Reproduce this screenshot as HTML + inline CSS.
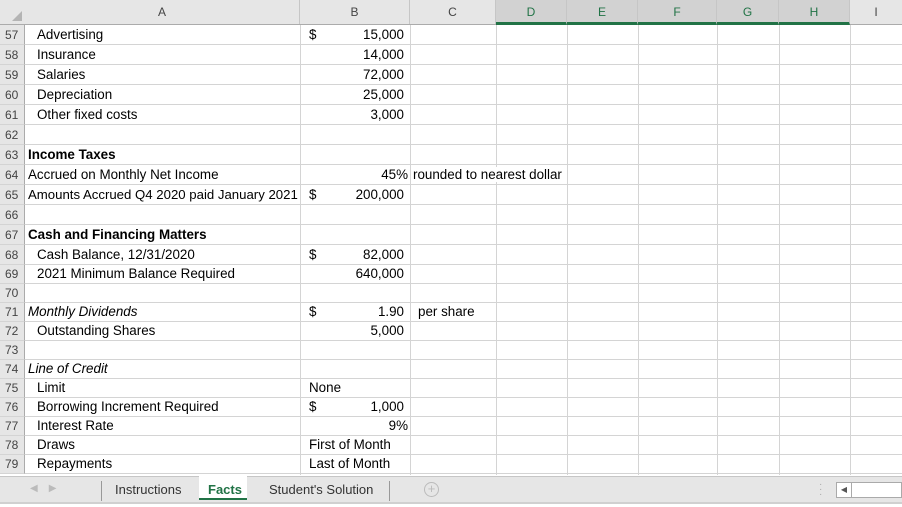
<!DOCTYPE html>
<html><head><meta charset="utf-8"><style>
*{margin:0;padding:0;box-sizing:border-box}
body{width:902px;height:507px;overflow:hidden;background:#fff;font-family:"Liberation Sans",sans-serif;font-size:13.4px;color:#000;position:relative}
.hdr{position:absolute;top:0;left:0;width:902px;height:25px;background:#e6e6e6;border-bottom:1px solid #ababab}
.ch{position:absolute;top:0;height:24px;line-height:24px;text-align:center;color:#444;font-size:12px;border-right:1px solid #c6c6c6}
.ch.sel{background:#d2d2d2;color:#217346;border-bottom:3px solid #217346;height:25px}
.rn{position:absolute;left:0;width:25px;background:#e6e6e6;color:#444;font-size:12px;padding-left:5px;border-right:1px solid #ababab;border-bottom:1px solid #d4d4d4}
.vl{position:absolute;top:25px;height:450px;width:1px;background:#d4d4d4}
.hl{position:absolute;left:25px;width:877px;height:1px;background:#d4d4d4}
.t{position:absolute;white-space:nowrap}
.r{text-align:right}
.tab{position:absolute;top:476px;left:0;width:902px;height:28px;background:#e6e6e6;border-top:1px solid #c6c6c6;border-bottom:2px solid #d0d0d0}
</style></head><body>
<div class="hdr">
<svg style="position:absolute;left:12px;top:11px" width="10" height="10"><path d="M10 0V10H0Z" fill="#b4b4b4"/></svg>
<div class="ch" style="left:25px;width:275px">A</div>
<div class="ch" style="left:300px;width:110px">B</div>
<div class="ch" style="left:410px;width:86px">C</div>
<div class="ch sel" style="left:496px;width:71px">D</div>
<div class="ch sel" style="left:567px;width:71px">E</div>
<div class="ch sel" style="left:638px;width:79px">F</div>
<div class="ch sel" style="left:717px;width:62px">G</div>
<div class="ch sel" style="left:779px;width:71px">H</div>
<div class="ch" style="left:850px;width:52px;border:none">I</div>
</div>
<div class="vl" style="left:300px"></div><div class="vl" style="left:410px"></div><div class="vl" style="left:496px"></div><div class="vl" style="left:567px"></div><div class="vl" style="left:638px"></div><div class="vl" style="left:717px"></div><div class="vl" style="left:779px"></div><div class="vl" style="left:850px"></div>

<div class="rn" style="top:25px;height:20px;line-height:20px">57</div><div class="hl" style="top:44px"></div>
<div class="rn" style="top:45px;height:20px;line-height:20px">58</div><div class="hl" style="top:64px"></div>
<div class="rn" style="top:65px;height:20px;line-height:20px">59</div><div class="hl" style="top:84px"></div>
<div class="rn" style="top:85px;height:20px;line-height:20px">60</div><div class="hl" style="top:104px"></div>
<div class="rn" style="top:105px;height:20px;line-height:20px">61</div><div class="hl" style="top:124px"></div>
<div class="rn" style="top:125px;height:20px;line-height:20px">62</div><div class="hl" style="top:144px"></div>
<div class="rn" style="top:145px;height:20px;line-height:20px">63</div><div class="hl" style="top:164px"></div>
<div class="rn" style="top:165px;height:20px;line-height:20px">64</div><div class="hl" style="top:184px"></div>
<div class="rn" style="top:185px;height:20px;line-height:20px">65</div><div class="hl" style="top:204px"></div>
<div class="rn" style="top:205px;height:20px;line-height:20px">66</div><div class="hl" style="top:224px"></div>
<div class="rn" style="top:225px;height:20px;line-height:20px">67</div><div class="hl" style="top:244px"></div>
<div class="rn" style="top:245px;height:20px;line-height:20px">68</div><div class="hl" style="top:264px"></div>
<div class="rn" style="top:265px;height:19px;line-height:19px">69</div><div class="hl" style="top:283px"></div>
<div class="rn" style="top:284px;height:19px;line-height:19px">70</div><div class="hl" style="top:302px"></div>
<div class="rn" style="top:303px;height:19px;line-height:19px">71</div><div class="hl" style="top:321px"></div>
<div class="rn" style="top:322px;height:19px;line-height:19px">72</div><div class="hl" style="top:340px"></div>
<div class="rn" style="top:341px;height:19px;line-height:19px">73</div><div class="hl" style="top:359px"></div>
<div class="rn" style="top:360px;height:19px;line-height:19px">74</div><div class="hl" style="top:378px"></div>
<div class="rn" style="top:379px;height:19px;line-height:19px">75</div><div class="hl" style="top:397px"></div>
<div class="rn" style="top:398px;height:19px;line-height:19px">76</div><div class="hl" style="top:416px"></div>
<div class="rn" style="top:417px;height:19px;line-height:19px">77</div><div class="hl" style="top:435px"></div>
<div class="rn" style="top:436px;height:19px;line-height:19px">78</div><div class="hl" style="top:454px"></div>
<div class="rn" style="top:455px;height:19px;line-height:19px">79</div><div class="hl" style="top:473px"></div>

<div class="t" style="left:37px;top:27px">Advertising</div><div class="t" style="left:309px;top:27px">$</div><div class="t r" style="right:498px;top:27px">15,000</div>
<div class="t" style="left:37px;top:47px">Insurance</div><div class="t r" style="right:498px;top:47px">14,000</div>
<div class="t" style="left:37px;top:67px">Salaries</div><div class="t r" style="right:498px;top:67px">72,000</div>
<div class="t" style="left:37px;top:87px">Depreciation</div><div class="t r" style="right:498px;top:87px">25,000</div>
<div class="t" style="left:37px;top:107px">Other fixed costs</div><div class="t r" style="right:498px;top:107px">3,000</div>
<div class="t" style="left:28px;top:147px;font-weight:bold">Income Taxes</div>
<div class="t" style="left:28px;top:167px">Accrued on Monthly Net Income</div><div class="t r" style="right:494px;top:167px">45%</div><div class="t" style="left:413px;top:167px;background:#fff">rounded to nearest dollar</div>
<div class="t" style="left:28px;top:187px;font-size:13.2px">Amounts Accrued Q4 2020 paid January 2021</div><div class="t" style="left:309px;top:187px">$</div><div class="t r" style="right:498px;top:187px">200,000</div>
<div class="t" style="left:28px;top:227px;font-weight:bold">Cash and Financing Matters</div>
<div class="t" style="left:37px;top:247px">Cash Balance, 12/31/2020</div><div class="t" style="left:309px;top:247px">$</div><div class="t r" style="right:498px;top:247px">82,000</div>
<div class="t" style="left:37px;top:266px">2021 Minimum Balance Required</div><div class="t r" style="right:498px;top:266px">640,000</div>
<div class="t" style="left:28px;top:304px;font-style:italic">Monthly Dividends</div><div class="t" style="left:309px;top:304px">$</div><div class="t r" style="right:498px;top:304px">1.90</div><div class="t" style="left:418px;top:304px">per share</div>
<div class="t" style="left:37px;top:323px">Outstanding Shares</div><div class="t r" style="right:498px;top:323px">5,000</div>
<div class="t" style="left:28px;top:361px;font-style:italic">Line of Credit</div>
<div class="t" style="left:37px;top:380px">Limit</div><div class="t" style="left:309px;top:380px">None</div>
<div class="t" style="left:37px;top:399px">Borrowing Increment Required</div><div class="t" style="left:309px;top:399px">$</div><div class="t r" style="right:498px;top:399px">1,000</div>
<div class="t" style="left:37px;top:418px">Interest Rate</div><div class="t r" style="right:494px;top:418px">9%</div>
<div class="t" style="left:37px;top:437px">Draws</div><div class="t" style="left:309px;top:437px">First of Month</div>
<div class="t" style="left:37px;top:456px">Repayments</div><div class="t" style="left:309px;top:456px">Last of Month</div>

<div class="tab">
<div class="t" style="left:30px;top:6px;color:#bbb;font-size:10px">◀&nbsp;&nbsp;&nbsp;&nbsp;▶</div>
<div style="position:absolute;left:101px;top:4px;width:1px;height:20px;background:#999"></div>
<div class="t" style="left:115px;top:5px;color:#333;font-size:13px">Instructions</div>
<div style="position:absolute;left:199px;top:-1px;width:48px;height:24px;background:#fff;border-bottom:2px solid #217346"></div>
<div class="t" style="left:208px;top:5px;color:#217346;font-weight:bold;font-size:13px">Facts</div>
<div class="t" style="left:269px;top:5px;color:#333;font-size:13px">Student's Solution</div>
<div style="position:absolute;left:389px;top:4px;width:1px;height:20px;background:#999"></div>
<div style="position:absolute;left:424px;top:5px;width:15px;height:15px;border:1px solid #bbb;border-radius:50%;color:#bbb;font-size:13px;line-height:12px;text-align:center">+</div>
<div class="t" style="left:819px;top:5px;color:#aaa;font-size:10px;line-height:5px">·<br>·<br>·</div>
<div style="position:absolute;left:836px;top:5px;width:66px;height:16px;background:#fff;border:1px solid #aaa"></div>
<div style="position:absolute;left:836px;top:5px;width:16px;height:16px;border:1px solid #aaa;font-size:8px;line-height:14px;text-align:center;color:#555">◀</div>
</div>
</body></html>
